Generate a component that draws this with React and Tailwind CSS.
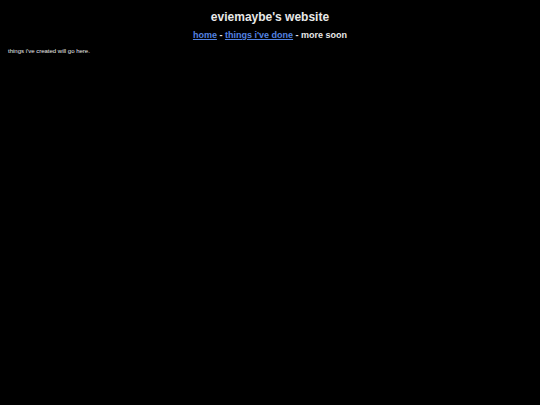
import React from 'react';

export default function App() {
  return (
    <div className="min-h-[405px] bg-black text-[#e8e8e8] px-2 pt-[10px]" style={{ fontFamily: '"Liberation Sans", Arial, sans-serif' }}>
      <h1 className="text-center font-bold text-[12px] leading-[14px]">eviemaybe's website</h1>
      <nav className="text-center font-bold text-[9px] leading-[11px] mt-[6px]">
        <a href="#" className="text-[#5383e0] underline">home</a>
        <span> - </span>
        <a href="#" className="text-[#5383e0] underline">things i've done</a>
        <span> - more soon</span>
      </nav>
      <p className="text-[6px] leading-[8px] mt-[6px]">things i've created will go here.</p>
    </div>
  );
}
